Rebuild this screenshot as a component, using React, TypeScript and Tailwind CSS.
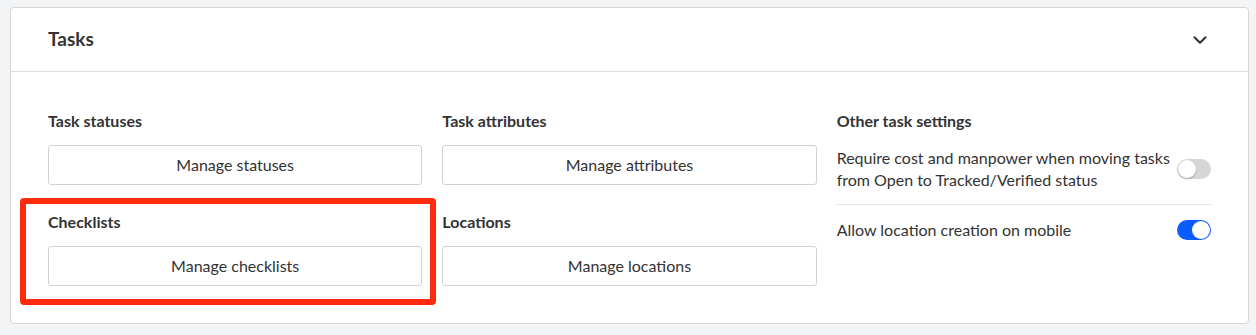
import { ChevronDown } from "lucide-react";

const ManageButton = ({ label }: { label: string }) => (
    <button className="h-[40px] w-full rounded-[3px] border border-[#d2d2d2] bg-white text-[16px] text-[#333]">
        {label}
    </button>
);

const Section = ({ title, action }: { title: string; action: string }) => (
    <div className="flex flex-col">
        <h3 className="h-[20px] text-[16px] leading-[20px] font-bold text-[#333]">{title}</h3>
        <div className="mt-[14px]">
            <ManageButton label={action} />
        </div>
    </div>
);

const Toggle = ({ on }: { on: boolean }) => (
    <div
        className={
            on
                ? "relative h-[20px] w-[34px] shrink-0 rounded-full bg-[#0b5cff]"
                : "relative h-[20px] w-[34px] shrink-0 rounded-full bg-[#d6d6d9]"
        }
    >
        <span
            className={
                on
                    ? "absolute top-[1px] right-[1px] h-[18px] w-[18px] rounded-full bg-white"
                    : "absolute top-[1px] left-[1px] h-[18px] w-[18px] rounded-full bg-white shadow-[0_1px_2px_rgba(0,0,0,0.25)]"
            }
        />
    </div>
);

export default function App() {
    return (
        <div className="relative min-h-[335px] bg-[#f3f4f6] pt-[7px] pr-[7px] pl-[10px] font-['Lato','Liberation_Sans',sans-serif]">
            <div className="w-[1239px] rounded-[4px] border border-[#d6d6d6] bg-white">
                <div className="flex h-[64px] items-center justify-between border-b border-[#dcdcdc] pr-[37px] pl-[37px]">
                    <h2 className="text-[19px] font-bold text-[#333]">Tasks</h2>
                    <ChevronDown size={22} strokeWidth={2.3} className="text-[#333]" />
                </div>

                <div className="grid grid-cols-3 gap-x-5 px-[37px] pt-[39px] pb-[37px]">
                    <div className="flex flex-col gap-[27px]">
                        <Section title="Task statuses" action="Manage statuses" />
                        <Section title="Checklists" action="Manage checklists" />
                    </div>
                    <div className="flex flex-col gap-[27px]">
                        <Section title="Task attributes" action="Manage attributes" />
                        <Section title="Locations" action="Manage locations" />
                    </div>
                    <div className="flex flex-col">
                        <h3 className="h-[20px] text-[16px] leading-[20px] font-bold text-[#333]">Other task settings</h3>
                        <div className="mt-[16px] flex items-center justify-between gap-[4px] border-b border-[#e6e6e6] pb-[13px]">
                            <p className="text-[16px] leading-[22px] text-[#333]">
                                Require cost and manpower when moving tasks from Open to Tracked/Verified status
                            </p>
                            <Toggle on={false} />
                        </div>
                        <div className="flex items-center justify-between gap-[4px] pt-[14px]">
                            <p className="text-[16px] leading-[22px] text-[#333]">Allow location creation on mobile</p>
                            <Toggle on={true} />
                        </div>
                    </div>
                </div>
            </div>

            {/* highlight around the checklists block */}
            <div className="pointer-events-none absolute top-[198px] left-[20px] h-[107px] w-[416px] rounded-[4px] border-[6px] border-[#fe2c0c]" />
        </div>
    );
}
